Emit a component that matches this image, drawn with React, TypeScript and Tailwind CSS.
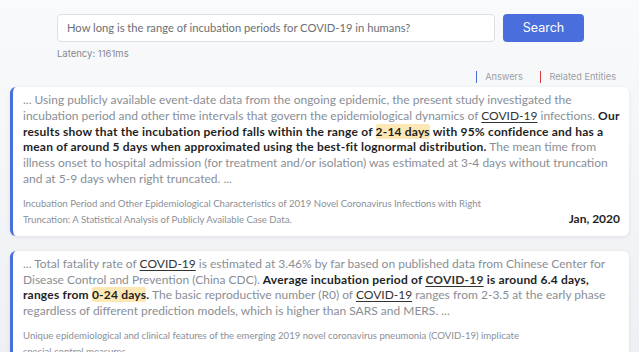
import type { ReactNode } from "react";

const Hl = ({ children }: { children: ReactNode }) => (
  <span className="bg-[#fde7b4] rounded-[2px]">{children}</span>
);

const Ent = ({ children }: { children: ReactNode }) => (
  <span className="underline underline-offset-2 text-[#333]">{children}</span>
);

const B = ({ children }: { children: ReactNode }) => (
  <span className="font-bold text-[#1f1f1f] tracking-[0.2px]">{children}</span>
);

function Card({ body, title, date }: { body: ReactNode; title: string; date?: string }) {
  return (
    <div className="bg-white rounded-md border-l-[3px] border-[#4a6fdc] shadow-[0_1px_4px_rgba(0,0,0,0.08)] pl-[10px] pr-[9px] pt-[5px] pb-[8px]">
      <p className="text-[12px] leading-[15.8px] text-[#8a8e96]">{body}</p>
      <div className="mt-[9px] flex items-end justify-between">
        <p className="text-[9.6px] leading-[16px] text-[#8b8f97] max-w-[500px]">
          {title}
        </p>
        {date && <span className="text-[12px] font-bold text-[#1f1f1f]">{date}</span>}
      </div>
    </div>
  );
}

export default function App() {
  return (
    <div className="h-[352px] overflow-hidden bg-gradient-to-b from-[#f9fafb] to-[#eef0f3] font-['Lato',sans-serif]">
      <div className="pl-[57px] pr-[55px] pt-[14px]">
        <div className="flex gap-[8px]">
          <div className="w-[438px] h-[28px] bg-white border border-[#dcdfe4] rounded-[4px] flex items-center px-[9px] text-[11.2px] text-[#6b6f76] whitespace-nowrap overflow-hidden">
            How long is the range of incubation periods for COVID-19 in humans?
          </div>
          <button className="w-[81px] h-[28px] bg-[#4a6fdc] rounded-[4px] text-white text-[12.5px] font-['Inter']">
            Search
          </button>
        </div>
        <p className="mt-[5px] text-[9.5px] font-['Inter'] text-[#858a92]">Latency: 1161ms</p>
      </div>
      <div className="flex justify-end pr-[23px] mt-[9px] gap-[17px] font-['Inter'] text-[9.2px] text-[#9a9ea6]">
        <span className="flex items-center gap-[8px]">
          <span className="w-[1.5px] h-[12px] bg-[#4a6fdc]" />
          Answers
        </span>
        <span className="flex items-center gap-[8px]">
          <span className="w-[1.5px] h-[12px] bg-[#d9363e]" />
          Related Entities
        </span>
      </div>
      <div className="px-[10px] mt-[3px] flex flex-col gap-[15px]">
        <Card
          body={
            <>
              ... Using publicly available event-date data from the ongoing epidemic, the present study investigated the incubation period and other time intervals that govern the epidemiological dynamics of <Ent>COVID-19</Ent> infections.{" "}
              <B>
                Our results show that the incubation period falls within the range of <Hl>2-14 days</Hl> with 95% confidence and has a mean of around 5 days when approximated using the best-fit lognormal distribution.
              </B>{" "}
              The mean time from illness onset to hospital admission (for treatment and/or isolation) was estimated at 3-4 days without truncation and at 5-9 days when right truncated. ...
            </>
          }
          title="Incubation Period and Other Epidemiological Characteristics of 2019 Novel Coronavirus Infections with Right Truncation: A Statistical Analysis of Publicly Available Case Data."
          date="Jan, 2020"
        />
        <Card
          body={
            <>
              ... Total fatality rate of <Ent>COVID-19</Ent> is estimated at 3.46% by far based on published data from Chinese Center for Disease Control and Prevention (China CDC).{" "}
              <B>
                Average incubation period of <Ent>COVID-19</Ent> is around 6.4 days, ranges from <Hl>0-24 days</Hl>.
              </B>{" "}
              The basic reproductive number (R0) of <Ent>COVID-19</Ent> ranges from 2-3.5 at the early phase regardless of different prediction models, which is higher than SARS and MERS. ...
            </>
          }
          title="Unique epidemiological and clinical features of the emerging 2019 novel coronavirus pneumonia (COVID-19) implicate special control measures."
        />
      </div>
    </div>
  );
}
